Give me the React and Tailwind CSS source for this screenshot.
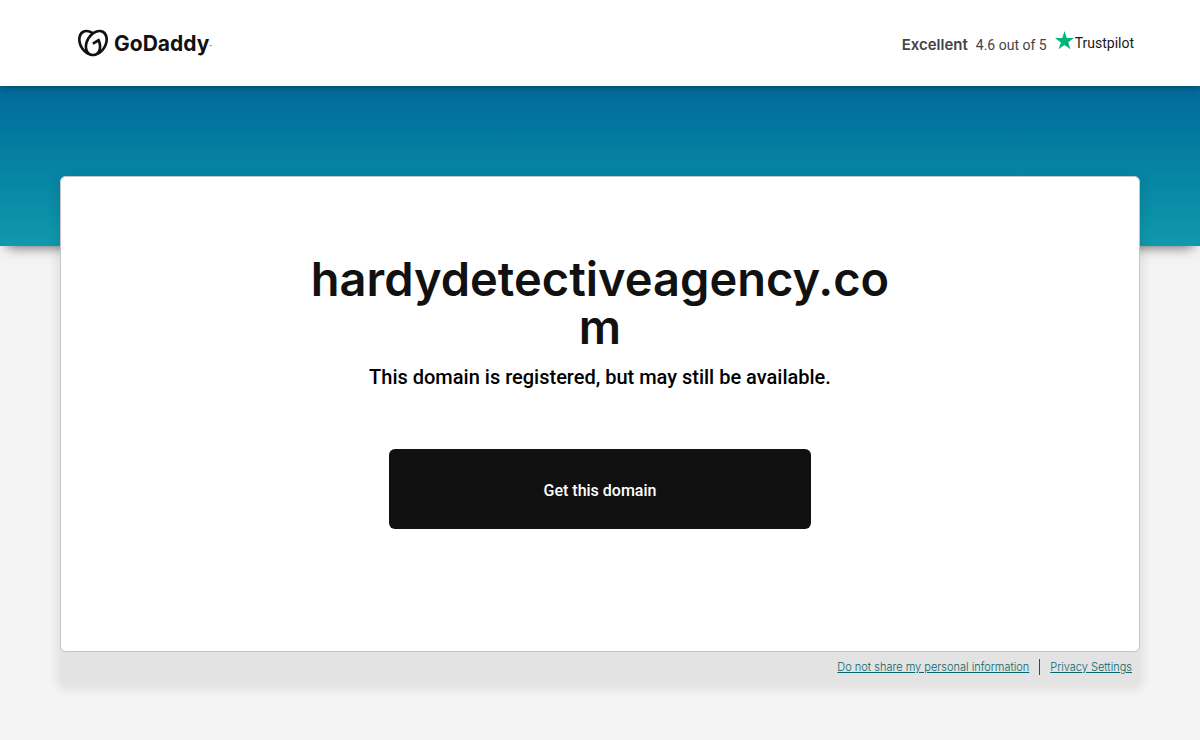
import { SiGodaddy } from 'react-icons/si'

function GoDaddyLogo() {
  return (
    <a href="#home" aria-label="GoDaddy" className="flex items-center gap-1.5 text-[#111111]">
      <SiGodaddy className="h-[30px] w-[30px]" />
      <span className="pt-0.5 font-['Inter'] text-[21px] leading-6 font-bold">
        GoDaddy<sup className="text-[4px]">™</sup>
      </span>
    </a>
  )
}

function TrustpilotLogo() {
  return (
    <span className="flex items-center gap-px">
      <svg viewBox="0 0 18 18" className="mb-1.5 h-[19px] w-[19px]" aria-hidden="true">
        <path fill="#00b67a" d="M9 0 11.1 6.6H18L12.4 10.8 14.6 17.4 9 13.3 3.4 17.4 5.6 10.8 0 6.6H6.9Z" />
        <path fill="#008c5a" d="M12.9 12.3 12.4 10.8 9 13.3Z" />
      </svg>
      <span className="text-sm leading-5 text-[#191919]">Trustpilot</span>
    </span>
  )
}

function Header() {
  return (
    <header className="relative z-10 flex h-[86px] items-center justify-between bg-white pr-[66px] pl-[78px] shadow-[0_1px_8px_rgba(0,0,0,0.35)]">
      <GoDaddyLogo />
      <div className="flex items-center gap-2 text-[#444444]">
        <span className="pt-1 font-['Inter'] text-[15px] leading-5 font-semibold">Excellent</span>
        <span className="pt-1 text-sm leading-5">4.6 out of 5</span>
        <TrustpilotLogo />
      </div>
    </header>
  )
}

function DomainCard() {
  return (
    <section className="flex flex-col items-center rounded-md border border-[#c4c4c4] bg-white px-6 pt-[78px] pb-[122px] text-center">
      <h1 className="w-full max-w-[600px] font-['Inter'] text-[47px] leading-12 font-semibold break-all text-[#111111]">
        hardydetectiveagency.com
      </h1>
      <p className="mt-3 text-xl leading-7 font-medium text-black">
        This domain is registered, but may still be available.
      </p>
      <button
        type="button"
        className="mt-[58px] h-20 w-full max-w-[422px] rounded-md bg-[#111111] pt-1 text-base font-medium text-white"
      >
        Get this domain
      </button>
    </section>
  )
}

function FooterLinks() {
  return (
    <footer className="flex h-[30px] items-center justify-end px-2 font-['Inter'] text-[11px] leading-4 font-light text-[#09656a]">
      <a href="#do-not-share" className="underline">Do not share my personal information</a>
      <span className="mx-2.5 h-4 w-px bg-[#444444]" />
      <a href="#privacy" className="underline">Privacy Settings</a>
    </footer>
  )
}

export default function App() {
  return (
    <div className="min-h-screen bg-[#f4f4f4] font-['Roboto','Liberation_Sans',sans-serif]">
      <Header />
      {/* teal banner behind the card */}
      <div className="h-40 bg-linear-to-b from-[#006b99] to-[#1199ac] shadow-[0_8px_12px_-7px_rgba(0,0,0,0.6)]" />
      <main className="relative mx-[60px] -mt-[70px] rounded-md bg-[#e3e3e3] shadow-[0_4px_10px_4px_rgba(0,0,0,0.075)]">
        <DomainCard />
        <FooterLinks />
      </main>
    </div>
  )
}
